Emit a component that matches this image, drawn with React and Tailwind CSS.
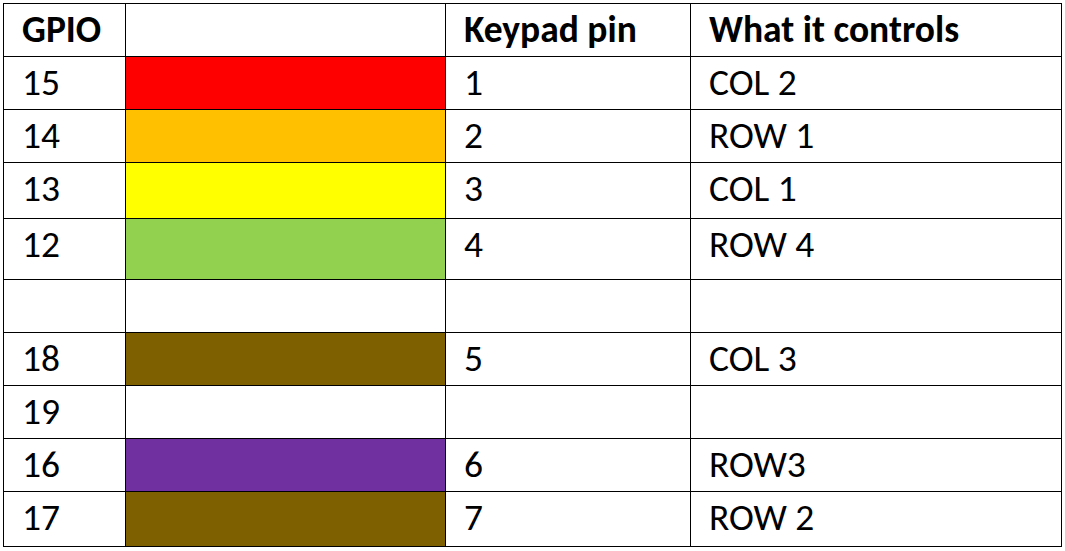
import React from "react";

const ROWS = [
  { gpio: "15", color: "bg-[#ff0000]", pin: "1", controls: "COL 2", h: "h-[53px]" },
  { gpio: "14", color: "bg-[#ffc000]", pin: "2", controls: "ROW 1", h: "h-[53px]" },
  { gpio: "13", color: "bg-[#ffff00]", pin: "3", controls: "COL 1", h: "h-[56px]" },
  { gpio: "12", color: "bg-[#92d050]", pin: "4", controls: "ROW 4", h: "h-[61px]" },
  { gpio: "", color: "", pin: "", controls: "", h: "h-[53px]" },
  { gpio: "18", color: "bg-[#7f6000]", pin: "5", controls: "COL 3", h: "h-[53px]" },
  { gpio: "19", color: "", pin: "", controls: "", h: "h-[53px]" },
  { gpio: "16", color: "bg-[#7030a0]", pin: "6", controls: "ROW3", h: "h-[53px]" },
  { gpio: "17", color: "bg-[#7f6000]", pin: "7", controls: "ROW 2", h: "h-[55px]" },
];

const cell = "border border-black align-top pl-[18px] pt-[5px] leading-[40px]";

export default function App() {
  return (
    <div className="h-[551px] w-[1065px] bg-white pl-[3px] pt-[3px] text-black" style={{ fontFamily: "Carlito, 'Open Sans', sans-serif" }}>
      <table className="w-[1058px] table-fixed border-collapse text-[37.5px]">
        <colgroup>
          <col className="w-[122px]" />
          <col className="w-[320px]" />
          <col className="w-[245px]" />
          <col className="w-[371px]" />
        </colgroup>
        <thead>
          <tr className="h-[53px] font-bold">
            <th className={`${cell} text-left`}>GPIO</th>
            <th className={cell}></th>
            <th className={`${cell} text-left`}>Keypad pin</th>
            <th className={`${cell} text-left`}>What it controls</th>
          </tr>
        </thead>
        <tbody>
          {ROWS.map((row, i) => (
            <tr key={i} className={row.h}>
              <td className={cell}>{row.gpio}</td>
              <td className={`${cell} ${row.color}`}></td>
              <td className={cell}>{row.pin}</td>
              <td className={cell}>{row.controls}</td>
            </tr>
          ))}
        </tbody>
      </table>
    </div>
  );
}
